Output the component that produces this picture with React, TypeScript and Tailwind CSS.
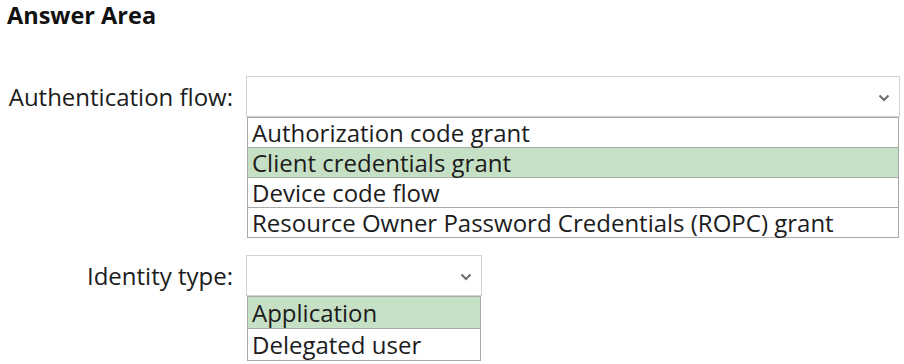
import { ReactNode } from "react";

const font = { fontFamily: '"Open Sans", "Noto Sans", "Liberation Sans", sans-serif' };

function Chevron() {
    return (
        <svg className="w-[12px] h-[8px] text-[#6b6b6b]" viewBox="0 0 12 8" fill="none" stroke="currentColor">
            <path d="M1.5 1.5l4.5 4.5 4.5-4.5" strokeWidth={2} />
        </svg>
    );
}

interface DropdownProps {
    width: string;
    options: string[];
    selected: number;
    rowHeight: string;
}

function Dropdown({ width, options, selected, rowHeight }: DropdownProps) {
    return (
        <div className={width}>
            {/* Closed select */}
            <div className="h-[41px] border border-[#d2d2d2] flex items-center justify-end pr-[9px] pt-[3px]">
                <Chevron />
            </div>
            {/* Options list */}
            <div className="border border-t-0 border-[#a9a9a9] ml-px mr-px">
                {options.map((opt, i) => (
                    <div
                        key={opt}
                        className={`${rowHeight} border-t border-[#a9a9a9] flex items-center pl-[4px] text-[24px] leading-none text-[#1c1c1c] ${i === selected ? "bg-[#c6e0c5]" : "bg-white"}`}
                    >
                        {opt}
                    </div>
                ))}
            </div>
        </div>
    );
}

function Row({ label, children }: { label: string; children: ReactNode }) {
    return (
        <div className="flex items-start">
            <div className="w-[246px] shrink-0 pr-[13px] h-[41px] flex items-center justify-end text-[24px] leading-none text-[#1c1c1c]">
                {label}
            </div>
            {children}
        </div>
    );
}

export default function App() {
    return (
        <div className="w-[904px] h-[364px] bg-white overflow-hidden" style={font}>
            <div className="pl-[7px] pt-[2px]">
                <h2 className="text-[23.5px] font-bold leading-[26px] text-[#111]">Answer Area</h2>
            </div>
            <div className="mt-[48px] flex flex-col gap-[17px]">
                <Row label="Authentication flow:">
                    <Dropdown
                        width="w-[654px]"
                        rowHeight="h-[30px]"
                        selected={1}
                        options={[
                            "Authorization code grant",
                            "Client credentials grant",
                            "Device code flow",
                            "Resource Owner Password Credentials (ROPC) grant",
                        ]}
                    />
                </Row>
                <Row label="Identity type:">
                    <Dropdown
                        width="w-[236px]"
                        rowHeight="h-[32px]"
                        selected={0}
                        options={["Application", "Delegated user"]}
                    />
                </Row>
            </div>
        </div>
    );
}
